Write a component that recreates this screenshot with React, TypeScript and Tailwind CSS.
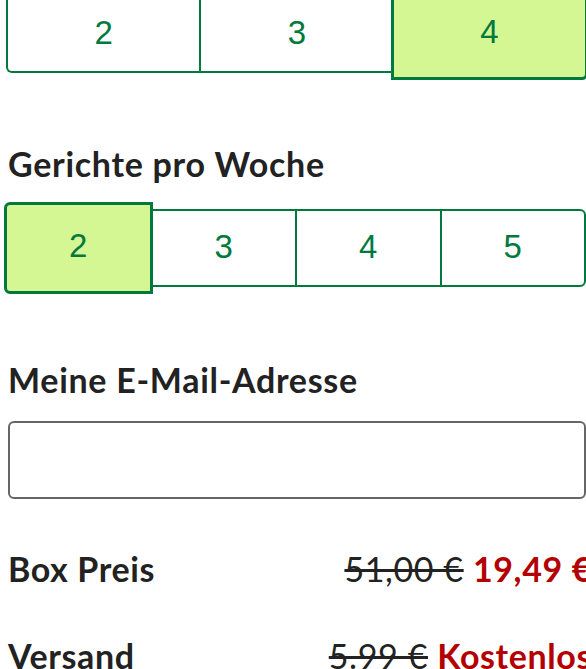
import { useState } from "react";

const green = "text-[#00793f]";

function Picker({ options, value, onChange }: { options: number[]; value: number; onChange: (v: number) => void }) {
  return (
    <div className="flex h-[92px] items-center">
      {options.map((opt, i) => {
        const selected = opt === value;
        const first = i === 0;
        const last = i === options.length - 1;
        if (selected) {
          return (
            <button
              key={opt}
              onClick={() => onChange(opt)}
              className={`relative z-10 -mx-[2px] flex h-[92px] flex-1 items-center justify-center border-[3px] border-[#00793f] bg-[#d4f794] pb-[4px] font-['Liberation_Sans',Arial,sans-serif] text-[33px] ${green} ${
                first ? "rounded-l-md" : ""
              } ${last ? "rounded-r-md" : ""}`}
            >
              {opt}
            </button>
          );
        }
        return (
          <button
            key={opt}
            onClick={() => onChange(opt)}
            className={`flex h-[78px] flex-1 items-center justify-center border-y-2 border-[#00793f] bg-white pb-[2px] font-['Liberation_Sans',Arial,sans-serif] text-[33px] ${green} ${
              first ? "rounded-l-md border-l-2" : "border-l-2"
            } ${last ? "rounded-r-md border-r-2" : ""}`}
          >
            {opt}
          </button>
        );
      })}
    </div>
  );
}

export default function App() {
  const [people, setPeople] = useState(4);
  const [meals, setMeals] = useState(2);

  return (
    <div className="h-[669px] w-[586px] overflow-hidden bg-white font-['Lato','Noto_Sans',sans-serif] text-[#222]">
      <div className="-mt-[12px] ml-[6px] w-[580px]">
        {/* Personen */}
        <Picker options={[2, 3, 4]} value={people} onChange={setPeople} />

        {/* Gerichte */}
        <h2 className="mt-[63px] ml-[2px] text-[34px] leading-[42px] font-bold tracking-[0.7px]">Gerichte pro Woche</h2>
        <div className="mt-[17px]">
          <Picker options={[2, 3, 4, 5]} value={meals} onChange={setMeals} />
        </div>

        {/* E-Mail */}
        <h2 className="mt-[65px] ml-[2px] text-[34px] leading-[42px] font-bold tracking-[0.7px]">Meine E-Mail-Adresse</h2>
        <input
          type="email"
          className="mt-[20px] ml-[2px] block h-[78px] w-[578px] rounded-md border-2 border-[#666] bg-white px-4 text-[24px] outline-none"
        />

        {/* Preise */}
        <div className="mt-[49px] ml-[2px] -mr-[6px] flex items-baseline justify-between text-[34px] leading-[42px] tracking-[0.6px]">
          <span className="font-bold">Box Preis</span>
          <span>
            <s className="decoration-[3px] text-[#222]">51,00 €</s>{" "}
            <span className="font-bold text-[#b30000]">19,49 €</span>
          </span>
        </div>
        <div className="mt-[45px] ml-[2px] -mr-[6px] flex items-baseline justify-between text-[34px] leading-[42px] tracking-[0.6px]">
          <span className="font-bold">Versand</span>
          <span>
            <s className="decoration-[3px] text-[#222]">5.99 €</s>{" "}
            <span className="font-bold text-[#b30000]">Kostenlos</span>
          </span>
        </div>
      </div>
    </div>
  );
}
